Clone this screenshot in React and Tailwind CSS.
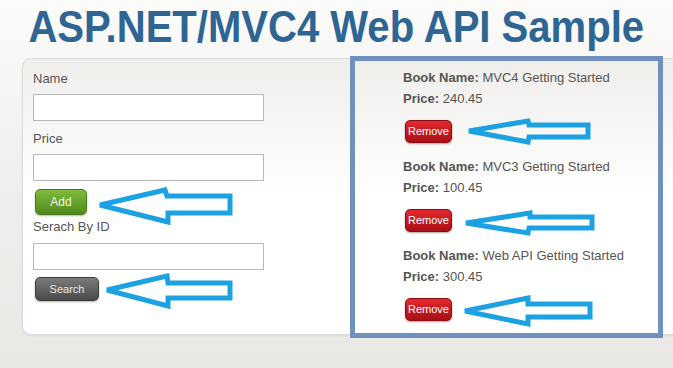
import React from "react";

const books = [
  { name: "MVC4 Getting Started", price: "240.45" },
  { name: "MVC3 Getting Started", price: "100.45" },
  { name: "Web API Getting Started", price: "300.45" },
];

// hand drawn annotation arrows, page coordinates
const arrows = [
  "100,205 165,190 167,196 230,196 230,213 168,213 168,222",
  "107,290 167,276 168,283 230,283 230,298 168,298 168,306",
  "469,131 528,121 529,125 588,125 588,137 529,137 528,142",
  "466,223 530,213 530,217 592,217 592,228 529,228 528,233",
  "465,311 528,298 528,304 590,304 590,317 528,317 528,324",
];

const Field = ({ label, first }) => (
  <>
    <div className={`${first ? "" : "mt-[10px]"} text-[13px] leading-[16px] text-[#555]`}>{label}</div>
    <div className="mt-[7px] h-[27px] w-[231px] border border-[#b8b8b8] bg-white"></div>
  </>
);

const App = () => {
  return (
    <div
      className="relative h-[368px] w-full overflow-hidden bg-gradient-to-b from-[#fbfbfa] via-[#f0efed] to-[#e9e8e5]"
      style={{ fontFamily: '"Liberation Sans", Arial, sans-serif' }}
    >
      {/* Title */}
      <div className="flex justify-center pt-[5px]">
        <h1 className="scale-x-[0.91] whitespace-nowrap text-[44px] font-bold leading-none text-[#2e6592]">
          ASP.NET/MVC4 Web API Sample
        </h1>
      </div>

      {/* Panel */}
      <div className="ml-[22px] mt-[9px] flex w-[700px] items-start rounded-l-[9px] border border-[#dcdbd7] bg-gradient-to-b from-[#efeeeb] via-white to-white shadow-[0_1px_2px_rgba(0,0,0,0.08)]">
        {/* Form column */}
        <div className="w-[327px] pb-[32px] pl-[10px] pt-[12px]">
          <Field label="Name" first />
          <Field label="Price" />
          <button className="ml-[2px] mt-[8px] flex h-[26px] w-[52px] items-center justify-center rounded-[5px] border border-[#467a1c] bg-gradient-to-b from-[#80bb3c] to-[#4f8b1d] text-[12px] text-[#f1f5e6] shadow-[0_1px_2px_rgba(0,0,0,0.3)]">
            Add
          </button>
          <div className="mt-[4px] text-[13px] leading-[16px] text-[#555]">Serach By ID</div>
          <div className="mt-[8px] h-[27px] w-[231px] border border-[#b8b8b8] bg-white"></div>
          <button className="ml-[2px] mt-[7px] flex h-[24px] w-[64px] items-center justify-center rounded-[5px] border border-[#3c3c3c] bg-gradient-to-b from-[#7b7b7b] to-[#4a4a4a] text-[11px] text-[#ececec] shadow-[0_1px_2px_rgba(0,0,0,0.3)]">
            Search
          </button>
        </div>

        {/* Book list, outlined */}
        <div className="-mb-[4px] -mt-[3px] h-[282px] w-[313px] border-[5px] border-[#7090bd] pl-[48px] pt-[6px]">
          {books.map((b) => (
            <div key={b.name} className="pb-[13px] text-[13px] leading-[21px] text-[#555]">
              <div className="whitespace-nowrap">
                <span className="font-bold">Book Name:</span> {b.name}
              </div>
              <div>
                <span className="font-bold">Price:</span> {b.price}
              </div>
              <button className="ml-[2px] mt-[11px] flex h-[23px] w-[47px] items-center justify-center rounded-[5px] border border-[#8c0c10] bg-gradient-to-b from-[#e4282f] to-[#a90f15] text-[11px] leading-none text-white shadow-[0_1px_2px_rgba(0,0,0,0.35)]">
                Remove
              </button>
            </div>
          ))}
        </div>
      </div>

      {/* Annotation arrows */}
      <svg className="pointer-events-none absolute left-0 top-0" width="673" height="368">
        {arrows.map((p, i) => (
          <polygon key={i} points={p} fill="none" stroke="#1ca2e2" strokeWidth="5" strokeLinejoin="miter" />
        ))}
      </svg>
    </div>
  );
};

export default App;
